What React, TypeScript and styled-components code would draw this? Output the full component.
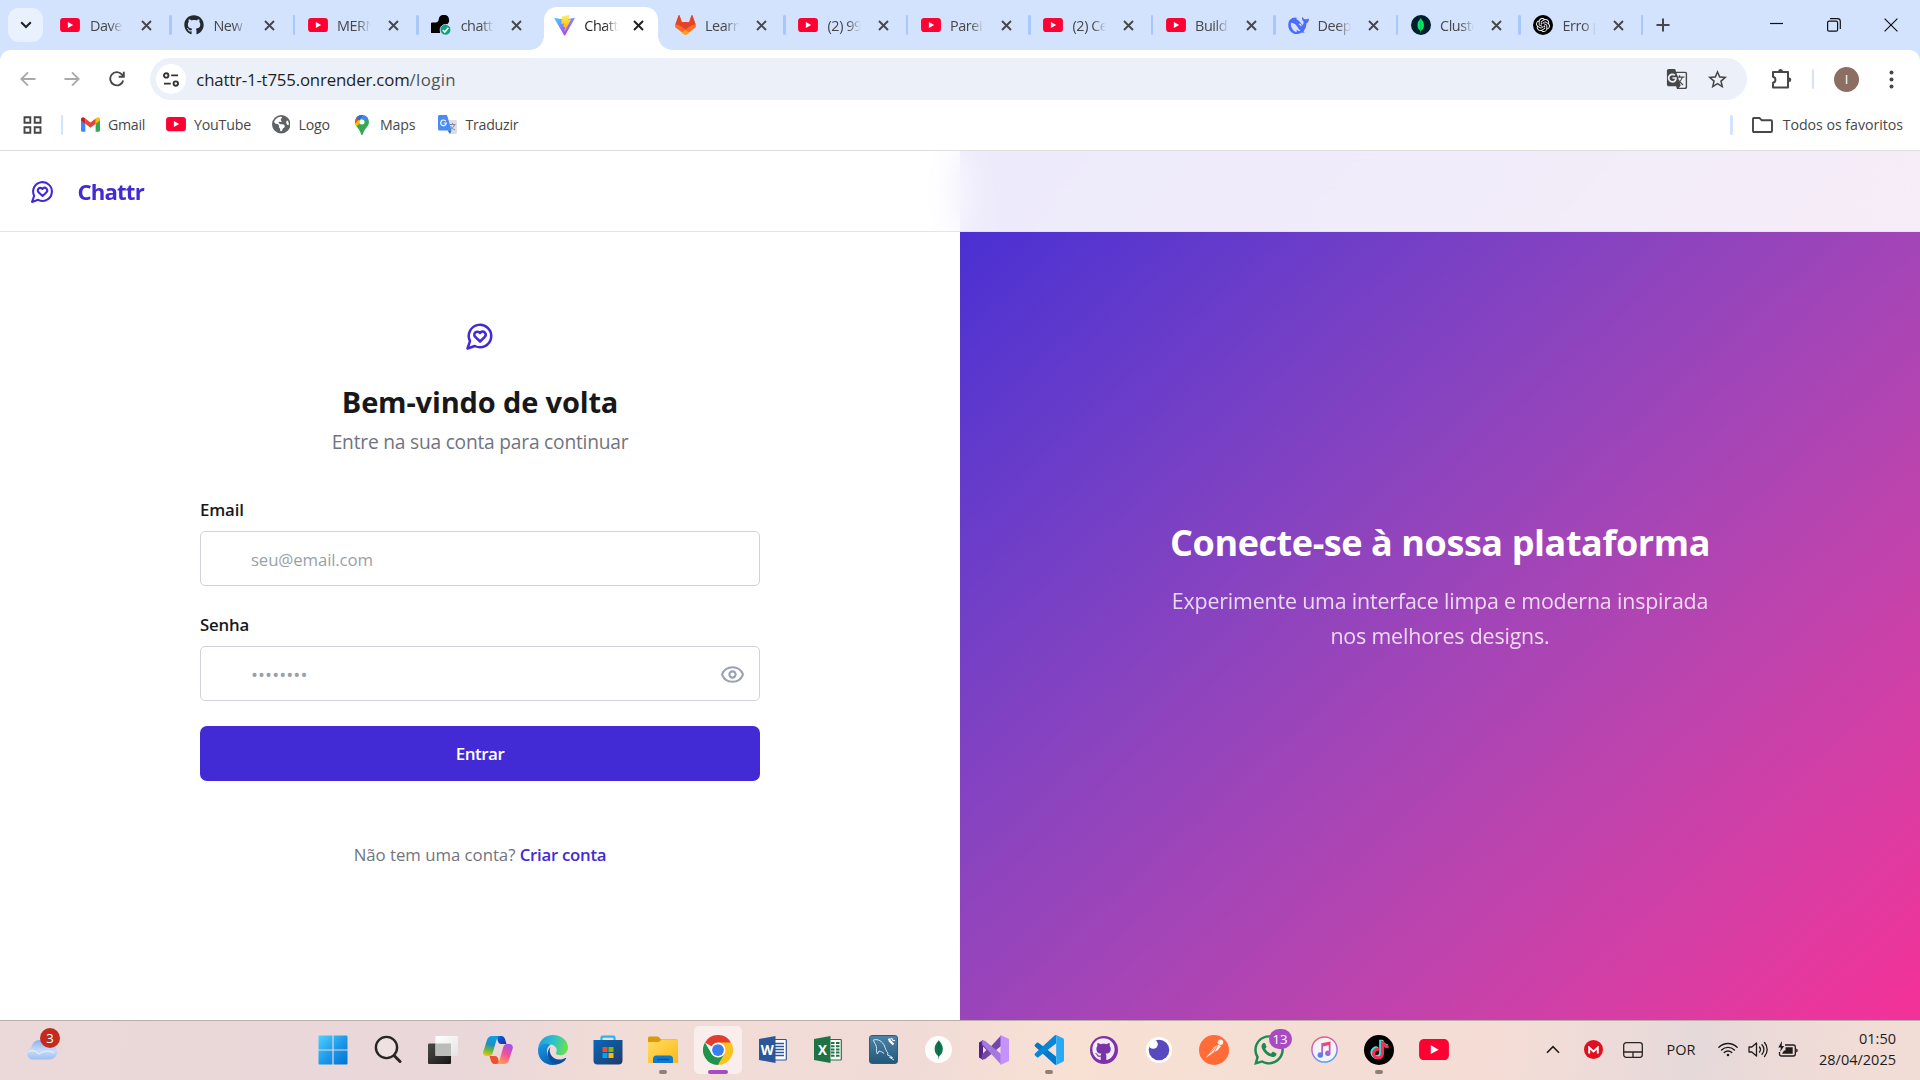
import React from 'react';
import styled, { createGlobalStyle, css } from 'styled-components';
import { FaGithub, FaTiktok, FaEarthAmericas, FaWhatsapp } from 'react-icons/fa6';
import { SiOpenai } from 'react-icons/si';
import { MdStarOutline, MdGTranslate } from 'react-icons/md';

const Global = createGlobalStyle`
  *, *::before, *::after { box-sizing: border-box; }
  html, body { margin: 0; padding: 0; overflow: hidden; }
  body { font-family: "Open Sans", "Noto Sans", sans-serif; background: #fff; color: #1a1a1e; }
  button, input { font: inherit; border: 0; background: none; padding: 0; margin: 0; color: inherit; }
  svg { display: block; flex: none; }
`;

/* ---------- layout shell ---------- */

const Screen = styled.div`
  width: 1920px;
  height: 1080px;
  display: grid;
  grid-template-rows: 50px 53px 47px 1px 869px 60px;
  overflow: hidden;
`;

/* ---------- tab strip ---------- */

const TabStrip = styled.div`
  display: flex;
  background: #d3e3fd;
  height: 50px;
`;

const TabSearch = styled.button`
  width: 35px;
  height: 34px;
  margin: 8px 4px 0 8px;
  border-radius: 11px;
  background: #eaf1fe;
  display: flex;
  align-items: center;
  justify-content: center;
`;

const Tab = styled.div<{ $width: number; $active?: boolean; $divider?: boolean }>`
  position: relative;
  flex: none;
  width: ${p => p.$width}px;
  height: 50px;
  padding-left: 13.4px;
  display: flex;
  align-items: center;
  font-size: 14.4px;
  letter-spacing: -0.45px;
  color: ${p => (p.$active ? '#1f1f1f' : '#474747')};
  ${p => p.$divider && css`
    &::after {
      content: '';
      position: absolute;
      right: -1px;
      top: 15px;
      width: 2.4px;
      height: 20px;
      border-radius: 2px;
      background: #a8c7fa;
    }
  `}
`;

const ActiveShape = styled.div`
  position: absolute;
  left: 3px;
  top: 7px;
  width: 114px;
  height: 43px;
  border-radius: 13px 13px 0 0;
  background: #fff;
  &::before, &::after {
    content: '';
    position: absolute;
    bottom: 0;
    width: 14px;
    height: 14px;
  }
  &::before { left: -14px; background: radial-gradient(circle at 0 0, transparent 13.5px, #fff 14px); }
  &::after { right: -14px; background: radial-gradient(circle at 100% 0, transparent 13.5px, #fff 14px); }
`;

const Favicon = styled.span`
  position: relative;
  width: 20px;
  height: 20px;
  display: flex;
  align-items: center;
  justify-content: center;
`;

const TabTitle = styled.span`
  position: relative;
  margin-left: 9.5px;
  width: 33.5px;
  overflow: hidden;
  white-space: nowrap;
  line-height: 24px;
  padding-top: 1px;
  mask-image: linear-gradient(to right, #000 60%, transparent);
`;

const TabClose = styled.span<{ $near?: boolean }>`
  position: relative;
  margin-left: ${p => (p.$near ? 15.5 : 17.3)}px;
`;

const NewTab = styled.button`
  width: 42px;
  display: flex;
  align-items: center;
  justify-content: center;
`;

const WindowControls = styled.div`
  margin-left: auto;
  display: flex;
  align-items: center;
  width: 172px;
  & > * { width: 57.3px; display: flex; justify-content: center; }
`;

/* ---------- toolbar ---------- */

const ToolbarBack = styled.div`background: #d3e3fd;`;

const Toolbar = styled.div`
  height: 53px;
  background: #fff;
  border-radius: 11px 11px 0 0;
  display: flex;
  align-items: center;
  padding: 5px 0 0 16.5px;
`;

const NavButton = styled.button<{ $muted?: boolean }>`
  width: 22px;
  height: 22px;
  margin-right: 22.6px;
  color: ${p => (p.$muted ? '#a9a9a9' : '#474747')};
  display: flex;
  align-items: center;
  justify-content: center;
`;

const Omnibox = styled.div`
  width: 1596.5px;
  height: 42px;
  border-radius: 21px;
  background: #ebf0f9;
  display: flex;
  align-items: center;
  padding: 0 17.5px 0 5.5px;
  color: #474747;
`;

const SiteInfo = styled.span`
  width: 30px;
  height: 30px;
  border-radius: 50%;
  background: #fff;
  display: flex;
  align-items: center;
  justify-content: center;
  margin-right: 10.5px;
`;

const Url = styled.span`
  flex: 1;
  font-size: 16.8px;
  letter-spacing: -0.17px;
  color: #1f1f1f;
  line-height: 24px;
  padding-top: 1px;
`;

const UrlPath = styled.span`color: #505358; letter-spacing: 0.4px;`;

const OmniAction = styled.span`
  width: 24px;
  margin-left: 16px;
  display: flex;
  justify-content: center;
`;

const VDivider = styled.span`
  flex: none;
  width: 2.4px;
  height: 20px;
  border-radius: 2px;
  background: #d3e3fd;
`;

const Extension = styled.span`margin: 0 19px 0 22px; color: #474747;`;

const Avatar = styled.span`
  width: 25px;
  height: 25px;
  margin: 0 30px 0 20px;
  border-radius: 50%;
  background: #8d6e63;
  color: #fff;
  font-size: 13px;
  line-height: 25px;
  text-align: center;
`;

/* ---------- bookmarks ---------- */

const Bookmarks = styled.div`
  background: #fff;
  display: flex;
  align-items: center;
  padding: 0 17px 4px 22.5px;
  font-size: 14.2px;
  letter-spacing: -0.15px;
  color: #474747;
`;

const Bookmark = styled.span<{ $left: number; $gap?: number; $w?: number; $track?: number }>`
  display: flex;
  align-items: center;
  gap: ${p => p.$gap ?? 8}px;
  margin-left: ${p => p.$left}px;
  width: ${p => (p.$w ? p.$w + 'px' : 'auto')};
  letter-spacing: ${p => p.$track ?? -0.15}px;
  white-space: nowrap;
`;

const AllBookmarks = styled.span`
  display: flex;
  align-items: center;
  gap: 10px;
  margin-left: 19px;
  letter-spacing: -0.04px;
`;

const Spacer = styled.span`flex: 1;`;
const Rule = styled.div`background: #dedede;`;

/* ---------- page ---------- */

const Page = styled.main`
  display: grid;
  grid-template: 869px / 960px 960px;
  overflow: hidden;
`;

const PageHeader = styled.header`
  grid-area: 1 / 1 / 2 / 3;
  align-self: start;
  z-index: 2;
  height: 81px;
  border-bottom: 1px solid #e5e5e8;
  background: rgba(255, 255, 255, 0.9);
  backdrop-filter: blur(19px);
  display: flex;
  align-items: center;
  gap: 23px;
  padding: 1px 0 0 29.5px;
  color: #422ad5;
`;

const BrandName = styled.span`
  font-size: 22.2px;
  font-weight: 700;
  letter-spacing: -0.85px;
  line-height: 30px;
`;

const FormPane = styled.section`
  grid-area: 1 / 1;
  background: #fff;
  display: flex;
  flex-direction: column;
  align-items: center;
  padding-top: 169.5px;
`;

const FormTitle = styled.h1`
  margin: 31.5px 0 0;
  font-size: 29px;
  font-weight: 700;
  line-height: 40px;
  letter-spacing: -0.15px;
  color: #18181b;
`;

const FormSubtitle = styled.p`
  margin: 5px 0 0;
  font-size: 19.2px;
  line-height: 30px;
  letter-spacing: -0.22px;
  color: #71747e;
`;

const Form = styled.form`
  width: 560px;
  margin-top: 40px;
  display: flex;
  flex-direction: column;
  gap: 26px;
`;

const Field = styled.label`
  display: flex;
  flex-direction: column;
  gap: 8px;
`;

const FieldLabel = styled.span`
  font-size: 16.8px;
  font-weight: 550;
  line-height: 26px;
  letter-spacing: -0.15px;
  color: #18181b;
`;

const InputBox = styled.span`
  height: 55px;
  border: 1px solid #d1d3da;
  border-radius: 5px;
  display: flex;
  align-items: center;
  padding: 1px 14px 0 50px;
  color: #99a1af;
`;

const Input = styled.input`
  flex: 1;
  outline: 0;
  font-size: 16.8px;
  letter-spacing: -0.13px;
  &::placeholder { color: #9a9fa9; opacity: 1; }
`;

const PasswordInput = styled(Input)`
  font-size: 18.5px;
  letter-spacing: 0.1px;
`;

const Submit = styled.button`
  height: 55px;
  margin-top: -1px;
  border-radius: 7px;
  background: #422ad5;
  color: #fff;
  font-size: 17px;
  font-weight: 600;
  letter-spacing: -0.5px;
`;

const SignUp = styled.p`
  margin: 61px 0 0;
  font-size: 16.8px;
  line-height: 25px;
  letter-spacing: -0.03px;
  color: #71747e;
`;

const SignUpLink = styled.a`
  color: #422ad5;
  font-weight: 600;
  letter-spacing: -0.27px;
`;

const Promo = styled.section`
  grid-area: 1 / 2;
  background: linear-gradient(to bottom right in oklab, #422ad5, #f43098);
  display: flex;
  flex-direction: column;
  align-items: center;
  justify-content: center;
  gap: 18px;
  color: #fff;
  text-align: center;
`;

const PromoTitle = styled.h2`
  margin: 0;
  padding-top: 1px;
  font-size: 36px;
  line-height: 45px;
  font-weight: 700;
  letter-spacing: -0.42px;
`;

const PromoText = styled.p`
  margin: 0;
  font-size: 21.4px;
  line-height: 35px;
  letter-spacing: -0.17px;
  opacity: 0.8;
`;

/* ---------- taskbar ---------- */

const Taskbar = styled.footer`
  border-top: 1px solid #b9aeac;
  display: flex;
  align-items: center;
  padding-bottom: 2px;
  background: linear-gradient(100deg, #ebd9d9 0%, #e9d7d9 24%, #f2dcd6 33%, #f1dbd7 48%, #f8e1d3 56%, #f4ddd4 68%, #f5ddd6 78%, #e6d9da 88%, #f2dcd6 97%, #f2dcd6 100%);
  color: #1f1b1b;
`;

const Weather = styled.div`
  position: relative;
  width: 305px;
  padding-left: 26px;
`;

const Badge = styled.span<{ $bg: string; $w: number; $x: number; $y: number }>`
  position: absolute;
  left: ${p => p.$x}px;
  top: ${p => p.$y}px;
  width: ${p => p.$w}px;
  height: 20px;
  border-radius: 10px;
  background: ${p => p.$bg};
  color: #fff;
  font-size: 13.2px;
  line-height: 20px;
  text-align: center;
`;

const AppSlot = styled.div`
  position: relative;
  width: 55.1px;
  height: 48px;
  flex: none;
  display: flex;
  align-items: center;
  justify-content: center;
`;

const AppFrame = styled.div<{ $on?: boolean }>`
  width: 48px;
  height: 48px;
  border-radius: 5px;
  display: flex;
  align-items: center;
  justify-content: center;
  ${p => p.$on && css`
    background: #f9eeec;
    box-shadow: 0 0 0 1px #ecdcda;
  `}
`;

const RunMark = styled.span<{ $on?: boolean }>`
  position: absolute;
  bottom: 0;
  left: 50%;
  transform: translateX(-50%);
  width: ${p => (p.$on ? 20 : 8)}px;
  height: 4px;
  border-radius: 2px;
  background: ${p => (p.$on ? '#a94bc0' : '#8c807d')};
`;

const Round = styled.span<{ $bg: string; $size: number; $color?: string }>`
  width: ${p => p.$size}px;
  height: ${p => p.$size}px;
  border-radius: 50%;
  background: ${p => p.$bg};
  color: ${p => p.$color ?? '#fff'};
  display: flex;
  align-items: center;
  justify-content: center;
`;

const Tray = styled.div`
  margin-left: auto;
  display: flex;
  align-items: center;
  padding-right: 24px;
  font-size: 14.5px;
`;

const TrayItem = styled.span<{ $w: number }>`
  width: ${p => p.$w}px;
  display: flex;
  justify-content: center;
`;

const Clock = styled.div`
  width: 91px;
  text-align: right;
  line-height: 20.5px;
`;

/* ---------- icons ---------- */

const YouTube = ({ w = 20 }: { w?: number }) => (
  <svg width={w} height={w * 0.71} viewBox="0 0 28 20">
    <rect width="28" height="20" rx="4.6" fill="#ff0033" />
    <path d="M11 5.800 18.400 10 11 14.200Z" fill="#fff" />
  </svg>
);

const CloseX = ({ c = '#474747' }: { c?: string }) => (
  <svg width="11" height="11" viewBox="0 0 11 11"><path d="M1 1l9 9M10 1l-9 9" stroke={c} strokeWidth="1.900" /></svg>
);

const RenderIcon = () => (
  <svg width="20" height="20" viewBox="0 0 20 20">
    <path d="M0 18V8.500q0-1 1-1H4.500Q7.500 7.200 7.700 4.500A5.200 5.200 0 1 1 14.500 10Q9 12 9 16v2Z" fill="#000" />
    <circle cx="14.500" cy="14.800" r="5.400" fill="#12a07d" stroke="#d3e3fd" strokeWidth=".8" />
    <path d="M11.800 15l2 2 3.500-4.200" fill="none" stroke="#fff" strokeWidth="1.600" />
  </svg>
);

const Vite = () => (
  <svg width="21" height="21" viewBox="0 0 32 32">
    <defs>
      <linearGradient id="va" x1="0" y1="0" x2=".6" y2="1"><stop stopColor="#41d1ff" /><stop offset="1" stopColor="#bd34fe" /></linearGradient>
      <linearGradient id="vb" x1="0" y1="0" x2="0" y2="1"><stop stopColor="#ffea83" /><stop offset=".3" stopColor="#ffdd35" /><stop offset="1" stopColor="#ffa800" /></linearGradient>
    </defs>
    <path d="M31.300 5.800 17 30.900c-.4.700-1.200.700-1.600 0L.8 5.800c-.4-.800.2-1.600 1-1.400L16 6.900l14.300-2.500c.8-.2 1.400.7 1 1.400Z" fill="url(#va)" />
    <path d="M22.800.1 12.300 2.200c-.2 0-.4.200-.4.400l-.6 10.700c0 .3.200.5.500.4l2.900-.6c.3-.1.500.2.500.5l-.9 4.200c0 .3.200.6.500.5l1.800-.5c.3-.1.600.2.500.5l-1.400 6.500c-.1.400.5.600.7.300l9.200-17.900c.2-.3-.1-.6-.4-.6l-3 .6c-.3.100-.5-.2-.4-.5l2-6.100c.1-.3-.2-.6-.5-.5Z" fill="url(#vb)" />
  </svg>
);

const GitLab = () => (
  <svg width="21" height="20" viewBox="0 0 25 24">
    <path d="M12.500 24 .8 15.300C0 14.600-.2 13 .3 11.500L4.200.6c.2-.6 1-.6 1.200 0L8 8.500h9L19.600.6c.2-.6 1-.6 1.200 0l3.900 10.900c.5 1.500.3 3.100-.5 3.800Z" fill="#fc6d26" />
    <path d="M8 8.500h9L19.600.6c.2-.6 1-.6 1.200 0l3.900 10.900C21 10.500 17 14 12.500 17.700 8 14 4 10.500.3 11.500L4.200.6c.2-.6 1-.6 1.200 0Z" fill="#e24329" />
    <path d="M7.800 21.500l4.700-3.800 4.700 3.800-4.700 2.500Z" fill="#fca326" />
  </svg>
);

const DeepSeek = () => (
  <svg width="21" height="19" viewBox="0 0 24 21">
    <path d="M23.500 2.800c-.9-.2-1.600.4-2.600.6-1.500.3-3-.4-3.700-1.900-.3-.7-1.200-.5-1.300.2-.1 1.700.6 3 1.900 4.300.2 1.300-.4 3-1 4.300C14.500 7.200 12 4.300 9.200 3 11 2.600 10.500 1.400 8.200 1.400 3.700 1.400.3 4.800.3 9.800c0 6 4.300 10.400 9.900 10.400 2.200 0 3.900-.6 5.300-1.700 1.100.4 2.700.5 3.800-.2-.7-.1-1.300-.5-1.600-1.100 2.300-2.600 3.200-5.600 3.300-9 1.900-.7 2.900-2.800 2.900-4.800 0-.4-.1-.5-.4-.6Z" fill="#4d6bfe" />
    <path d="M3.300 7.500c3.700-.3 6.300 2.700 8.200 5.700 1 1.600 1.600 2.700 2.800 3.700-1.800.2-3.500-.6-4.300-1.500-.2 1.300-.1 1.900.2 2.500C6 17.500 2.800 12.500 3.300 7.500Z" fill="#d3e3fd" />
    <path d="M12.500 9.300c.9-.7 2.600.4 2.400 2.100" stroke="#d3e3fd" strokeWidth="1.400" fill="none" />
  </svg>
);

const Leaf = ({ h, c }: { h: number; c: string }) => (
  <svg width={h * 0.5} height={h} viewBox="0 0 10 20">
    <path d="M5 0c.7 2 4.300 4.200 4.300 9.500 0 3.800-2 6.300-3.900 7.500L5.200 20h-.4L4.600 17C2.700 15.800.7 13.300.7 9.500.7 4.200 4.300 2 5 0Z" fill={c} />
    <path d="M5 2v16" stroke="#023430" strokeOpacity=".35" strokeWidth=".8" />
  </svg>
);

const ChatHeart = ({ size }: { size: number }) => (
  <svg width={size} height={size} viewBox="0 0 24 24" fill="none" stroke="#422ad5" strokeWidth="2" strokeLinecap="round" strokeLinejoin="round">
    <path d="M7.900 20A9 9 0 1 0 4 16.100L2 22Z" />
    <path d="M15.800 9.200a2.500 2.500 0 0 0-3.500 0l-.3.400-.35-.3a2.420 2.420 0 1 0-3.200 3.600l3.600 3.500 3.600-3.500c1.200-1.200 1.100-2.700.2-3.700" />
  </svg>
);

const Gmail = () => (
  <svg width="19" height="15" viewBox="0 0 24 18">
    <path d="M0 3v13.500C0 17.300.7 18 1.600 18H5.500V7.300Z" fill="#4285f4" />
    <path d="M24 3v13.500c0 .8-.7 1.500-1.600 1.500h-3.900V7.300Z" fill="#34a853" />
    <path d="M18.500 1.500V8.200L24 4V2.400c0-2-2.300-3.200-4-2Z" fill="#fbbc04" />
    <path d="M5.500 8.200V1.500L12 6.400l6.500-4.900v6.700L12 13.100Z" fill="#ea4335" />
    <path d="M0 2.400V4l5.500 4.200V1.500L4 .4C2.300-.8 0 .4 0 2.400Z" fill="#c5221f" />
  </svg>
);

const MapsPin = () => (
  <svg width="14" height="20" viewBox="0 0 14 20">
    <clipPath id="pin"><path d="M7 0a7 7 0 0 0-7 7c0 4.500 4.500 6 6 12 .3 1.300 1.700 1.300 2 0 1.500-6 6-7.500 6-12a7 7 0 0 0-7-7Z" /></clipPath>
    <g clipPath="url(#pin)">
      <rect width="14" height="20" fill="#34a853" />
      <path d="M-1 14 14 0v-1H-1Z" fill="#fbbc04" />
      <path d="M-1 9.500 8 0H-1Z" fill="#ea4335" />
      <path d="M1 3 4.500 5.500 9.500-1H2Z" fill="#1a73e8" />
      <path d="M9 0h5v3L8.500 6 6 3.500Z" fill="#4285f4" />
    </g>
    <circle cx="7" cy="7" r="2.500" fill="#fff" />
  </svg>
);

const TranslateIcon = () => (
  <svg width="19" height="19" viewBox="0 0 19 19">
    <path d="M7 5h10.500c.8 0 1.500.7 1.500 1.500v11c0 .8-.7 1.500-1.500 1.500H12Z" fill="#dcdee2" />
    <path d="M11.500 9.500h6M14.500 8.200v1.300M16.500 9.500c-.5 2.300-2 4-4 5M12.500 11c1 2 2.500 3 4.500 4" stroke="#7b8794" strokeWidth="1" fill="none" />
    <path d="M1.500 0H9l4.500 15.500H1.500A1.500 1.500 0 0 1 0 14V1.500C0 .7.700 0 1.500 0Z" fill="#4a8af4" />
    <path d="M9.500 15.500h4L12 19Z" fill="#3067d6" />
    <path d="M7.800 6.200A2.800 2.800 0 1 0 8.300 8H5.700" stroke="#fff" strokeWidth="1.200" fill="none" />
  </svg>
);

const WinLogo = () => (
  <svg width="30" height="30" viewBox="0 0 30 30">
    <defs><linearGradient id="win" x1="0" y1="0" x2="1" y2="1"><stop stopColor="#4fd2ff" /><stop offset=".5" stopColor="#1f9bea" /><stop offset="1" stopColor="#0072d0" /></linearGradient></defs>
    <path d="M1.500.5H14.400V14.400H.5V1.500q0-1 1-1ZM15.600.5h12.900q1 0 1 1V14.400H15.600ZM.5 15.600H14.400V29.500H1.500q-1 0-1-1ZM15.600 15.600H29.500v12.900q0 1-1 1H15.600Z" fill="url(#win)" />
  </svg>
);

const SearchGlyph = () => (
  <svg width="28" height="29" viewBox="0 0 28 29">
    <circle cx="12.500" cy="12.500" r="10.600" fill="#f3e6e6" fillOpacity=".6" stroke="#272624" strokeWidth="2.400" />
    <path d="M20.300 20.800 26 26.500" stroke="#272624" strokeWidth="3" strokeLinecap="round" />
  </svg>
);

const TaskView = () => (
  <svg width="30" height="28" viewBox="0 0 30 28">
    <defs>
      <linearGradient id="tv" x1="0" y1="0" x2="1" y2="1"><stop stopColor="#4a4a48" /><stop offset="1" stopColor="#171716" /></linearGradient>
      <linearGradient id="tw" x1="0" y1="0" x2="1" y2="1"><stop stopColor="#fff" /><stop offset="1" stopColor="#e4e4e4" /></linearGradient>
    </defs>
    <rect x="0" y="7.500" width="23" height="20.500" rx="1" fill="url(#tv)" />
    <rect x="7.500" y="0" width="22.500" height="20" rx="1" fill="url(#tw)" />
    <rect x="7.500" y="7.500" width="15.500" height="12.500" fill="#bcbcba" />
  </svg>
);

const Copilot = () => (
  <svg width="30" height="28" viewBox="0 0 30 28">
    <defs>
      <linearGradient id="ca" x1=".4" y1="0" x2=".2" y2="1"><stop stopColor="#0a9fe8" /><stop offset=".4" stopColor="#1f8fc0" /><stop offset=".7" stopColor="#6cb83e" /><stop offset="1" stopColor="#f4c60a" /></linearGradient>
      <linearGradient id="cb" x1=".8" y1="0" x2=".3" y2="1"><stop stopColor="#a44df0" /><stop offset=".5" stopColor="#f0539a" /><stop offset="1" stopColor="#ffa04a" /></linearGradient>
      <linearGradient id="cc" x1="0" y1="0" x2="1" y2="1"><stop stopColor="#1160d8" /><stop offset="1" stopColor="#1b2fa8" /></linearGradient>
    </defs>
    <path d="M14 0h4.500c2 0 3 1.500 3.500 3l1.500 5H18c-2 0-3-2-3.500-4Z" fill="url(#cc)" />
    <path d="M16 28h-4.500C9.500 28 8.500 26.500 8 25l-1.500-5H12c2 0 3 2 3.500 4Z" fill="#ee5130" />
    <path d="M9 0h8c-2 0-3 2-3.500 4L9.700 17c-.6 2-2 3-3.700 3H3.500C1 20-.3 18 .3 15.500L4 4c.9-2.600 2.600-4 5-4Z" fill="url(#ca)" />
    <path d="M21 28h-8c2 0 3-2 3.500-4l3.800-13c.6-2 2-3 3.700-3h2.500c2.500 0 3.800 2 3.200 4.500L26 24c-.9 2.600-2.600 4-5 4Z" fill="url(#cb)" />
  </svg>
);

const Edge = () => (
  <svg width="30" height="30" viewBox="0 0 30 30">
    <defs>
      <linearGradient id="ea" x1="0" y1=".3" x2="1" y2=".5"><stop stopColor="#1e9de0" /><stop offset=".5" stopColor="#2cc3c9" /><stop offset="1" stopColor="#6be04c" /></linearGradient>
      <linearGradient id="eb" x1="0" y1="0" x2=".4" y2="1"><stop stopColor="#1b9be3" /><stop offset="1" stopColor="#0a63b8" /></linearGradient>
    </defs>
    <path d="M.2 13C1.200 5.200 7.300 0 15 0c8.500 0 15 5.600 15 12.500 0 4.500-3.300 7.800-7.600 7.800-3.500 0-5-1.300-4.300-2.500 2-3.500-.6-7.800-5.600-8.300C7 9 2.300 10.500.2 13Z" fill="url(#ea)" />
    <path d="M.2 13C2.400 9.200 8 7.600 12.700 9.800c-3 1.200-4.200 4.700-3.500 8.500C10 23 13 27.500 18.800 29.500 9 32-1.500 25 .2 13Z" fill="url(#eb)" />
    <path d="M12.500 12c-2.500 4.800 1 12.500 9 12.500 2.700 0 4.200-.6 6-1.500.6-.3.900.3.600.8-2 3.200-5.300 5.200-9.300 5.700C10 28.500 7 17 12.500 12Z" fill="#0d4f9e" />
  </svg>
);

const Store = () => (
  <svg width="30" height="30" viewBox="0 0 30 30">
    <defs><linearGradient id="st" x1="0" y1="0" x2="1" y2="1"><stop stopColor="#0669bd" /><stop offset="1" stopColor="#243a66" /></linearGradient></defs>
    <path d="M8.500 7V3q0-1.300 1.300-1.300h10.400Q21.500 1.700 21.500 3v4" fill="none" stroke="#23b6f2" strokeWidth="2.200" />
    <path d="M.5 5h29v20.500q0 4-4 4h-21q-4 0-4-4Z" fill="url(#st)" />
    <path d="M9.500 12h5v5h-5Z" fill="#f25022" /><path d="M15.500 12h5v5h-5Z" fill="#7fba00" />
    <path d="M9.500 18h5v5h-5Z" fill="#00a4ef" /><path d="M15.500 18h5v5h-5Z" fill="#ffb900" />
  </svg>
);

const Explorer = () => (
  <svg width="30" height="28" viewBox="0 0 30 28">
    <defs><linearGradient id="ex" x1="0" y1="0" x2="1" y2="1"><stop stopColor="#ffdc60" /><stop offset="1" stopColor="#fbb917" /></linearGradient></defs>
    <path d="M0 2Q0 .5 1.500.5H9q1.500 0 2.300 1L13 3.500H28.500q1.500 0 1.500 1.500V9H0Z" fill="#dc9a08" />
    <path d="M0 6h10.500l3-2H30v23H0Z" fill="url(#ex)" />
    <path d="M5 27v-4q0-3.500 3.500-3.500h13q3.500 0 3.500 3.500v4Z" fill="#0f79d0" />
    <path d="M9 23.500h12" stroke="#0a4f94" strokeWidth="1.300" />
  </svg>
);

const Chrome = () => (
  <svg width="30" height="30" viewBox="0 0 48 48">
    <path d="M24 24 3.200 12A24 24 0 0 1 44.800 12Z" fill="#e33b2e" />
    <path d="M24 12h20.800A24 24 0 0 1 24 48L34.400 30Z" fill="#fcc31e" />
    <path d="M3.200 12 13.600 30 34.400 30 24 48A24 24 0 0 1 3.200 12Z" fill="#21944b" />
    <circle cx="24" cy="24" r="12" fill="#fff" />
    <circle cx="24" cy="24" r="9.400" fill="#3a7df0" />
  </svg>
);

const OfficeBox = styled.span`position: relative; width: 28px; height: 27px;`;

const Letter = styled.span`
  position: absolute;
  left: 0.5px;
  top: 5.5px;
  width: 15px;
  display: flex;
  justify-content: center;
  font-size: 13.5px;
  line-height: 16px;
  font-weight: 700;
  color: #fff;
`;

const Office = ({ c, letter, sheet }: { c: string; letter: string; sheet?: boolean }) => (
  <OfficeBox>
    <svg width="28" height="27" viewBox="0 0 28 27">
      <rect x="13" y="3.500" width="14.300" height="20.500" rx=".8" fill="#fff" stroke={c} strokeWidth="1.200" />
      {sheet
        ? <path d="M17 7h3.500M22 7h3.500M17 10.200h3.500M22 10.200h3.500M17 13.400h3.500M22 13.400h3.500M17 16.600h3.500M22 16.600h3.500M17 19.800h3.500M22 19.800h3.500" stroke={c} strokeWidth="2" />
        : <path d="M16 7.500h9M16 10.500h9M16 13.500h9M16 16.500h9M16 19.500h9" stroke={c} strokeWidth="1.500" />}
      <path d="M0 3 16.500 0v27L0 24Z" fill={c} />
    </svg>
    <Letter>{letter}</Letter>
  </OfficeBox>
);

const WorkbenchBox = styled.span`
  width: 29px;
  height: 29px;
  border-radius: 3px;
  border: 1px solid #2c5d7e;
  background: linear-gradient(#4b83a8, #23597a);
  display: flex;
  align-items: center;
  justify-content: center;
`;

const Dolphin = () => (
  <svg width="27" height="27" viewBox="0 0 27 27" fill="none" stroke="#dbe8ef" strokeWidth="1">
    <path d="M3.500 4c4.500-1.500 9 1.500 11 6 1 2.500 1.500 5 3.500 7l-.5 2c2 .5 3.500 1.500 5 2.500l-3-.2 4.500 2.700M3.500 4c.3 2.500 2.300 4 2.800 6.500.5 2.500-.3 5.500 1 7.500L9 15c2 .5 3.500 1 5 2.500" />
    <path d="M19 2.500l1 2.500 3.500 3.500" stroke="#fff" strokeWidth="2.400" /><path d="M21.500 2l1.500 2.500h2M19 5.500h3" stroke="#fff" strokeWidth="1.200" />
  </svg>
);

const VisualStudio = () => (
  <svg width="30" height="30" viewBox="0 0 30 30">
    <path d="M0 7.500 4 5.300v19.400L0 22.500Z" fill="#52218a" />
    <path d="M4 5.300 15 15 4 24.700l-1.500-.7V20L7.500 15 2.500 10V6Z" fill="#6b3fa5" />
    <path d="M3 24l3 .3L22 11V.5L3.500 20.500Z" fill="#7446a8" />
    <path d="M3 6 6 5.700 22 19v10.500L3.500 9.500Z" fill="#a478dc" />
    <path d="M21.500 0 30 4v22l-8.500 4Z" fill="#c592fb" />
  </svg>
);

const VSCode = () => (
  <svg width="30" height="30" viewBox="0 0 30 30">
    <path d="M1 9.500 3 7.800q.7-.5 1.400 0L22 21.500V30q-1 0-1.700-.7L1 11.600Q0 10.500 1 9.500Z" fill="#0179cb" />
    <path d="M1 20.500 3 22.200q.7.500 1.400 0L22 8.500V0q-1 0-1.700.7L1 18.400Q0 19.500 1 20.500Z" fill="#0a86d9" />
    <path d="M21 .5q1-.6 1.800-.2L29 3.300q1 .5 1 1.500v20.400q0 1-1 1.500l-6.200 3q-.8.400-1.800-.2 1.200.2 1.200-1.300V1.800Q22.200.3 21 .5Z" fill="#27a9f3" />
  </svg>
);

const Insomnia = () => (
  <svg width="26" height="26" viewBox="0 0 26 26">
    <circle cx="13" cy="13" r="13" fill="#fff" />
    <circle cx="13" cy="13" r="10.300" fill="#5849be" />
    <circle cx="7.200" cy="7.200" r="4.600" fill="#fff" />
  </svg>
);

const Postman = () => (
  <svg width="30" height="30" viewBox="0 0 30 30">
    <circle cx="15" cy="15" r="15" fill="#ff6c37" />
    <circle cx="21.500" cy="7.300" r="2.700" fill="#fff1ea" />
    <path d="M19.500 9.800 15 12l-2.500 3.500L10 19l-3.500 4 5-3.300L15 17l3.500-1.500L22 11Z" fill="#fff1ea" />
    <path d="M11 18.500l5-6M18.500 10.500 15 17" stroke="#ff6c37" strokeWidth=".8" />
  </svg>
);

const MusicIcon = () => (
  <svg width="27" height="27" viewBox="0 0 27 27">
    <defs>
      <linearGradient id="mr" x1=".3" y1="0" x2=".6" y2="1"><stop stopColor="#f4556b" /><stop offset=".5" stopColor="#b070e0" /><stop offset="1" stopColor="#4aa8f5" /></linearGradient>
      <linearGradient id="mn" x1=".6" y1="0" x2=".3" y2="1"><stop stopColor="#f4465e" /><stop offset=".5" stopColor="#b25fe0" /><stop offset="1" stopColor="#3f86f0" /></linearGradient>
    </defs>
    <circle cx="13.500" cy="13.500" r="12.600" fill="#f4f3f8" stroke="url(#mr)" strokeWidth="1.500" />
    <path d="M10.300 7.200 19.500 5.500v11.700a2.700 2.700 0 1 1-1.700-2.500V9.300l-5.800 1.100v8.600a2.700 2.700 0 1 1-1.700-2.500Z" fill="url(#mn)" />
  </svg>
);

const TikBox = styled.span`
  display: grid;
  place-items: center;
  & > svg { grid-area: 1 / 1; }
  & > svg:nth-child(1) { color: #25f4ee; transform: translate(-0.8px, -0.6px); }
  & > svg:nth-child(2) { color: #fe2c55; transform: translate(0.8px, 0.6px); }
`;

const CloudIcon = () => (
  <svg width="31" height="21" viewBox="0 0 31 21">
    <defs><linearGradient id="cl" x1="0" y1="0" x2="0" y2="1"><stop stopColor="#8fb0ea" /><stop offset=".55" stopColor="#c8dcfa" /><stop offset="1" stopColor="#9dbdf0" /></linearGradient></defs>
    <path d="M6 20.500a6 6 0 0 1-.8-11.500A9 9 0 0 1 22 5.500 7.500 7.500 0 0 1 25 20.500Z" fill="url(#cl)" />
    <path d="M2 13c4-3 8-1 11 2 4-3 10-4 15-1" stroke="#e6f0ff" strokeWidth="1.300" fill="none" opacity=".8" />
  </svg>
);

/* ---------- data ---------- */

const tabs: { title: string; icon: React.ReactNode; w: number; active?: boolean; divider?: boolean }[] = [
  { title: 'Dave', icon: <YouTube />, w: 123.6, divider: true },
  { title: 'New r', icon: <FaGithub size={20} color="#24292f" />, w: 123.6, divider: true },
  { title: 'MERN', icon: <YouTube />, w: 123.6, divider: true },
  { title: 'chattr', icon: <RenderIcon />, w: 123.6 },
  { title: 'Chattr', icon: <Vite />, w: 120.8, active: true },
  { title: 'Learn', icon: <GitLab />, w: 122.5, divider: true },
  { title: '(2) 99', icon: <YouTube />, w: 122.5, divider: true },
  { title: 'Parei', icon: <YouTube />, w: 122.5, divider: true },
  { title: '(2) Ce', icon: <YouTube />, w: 122.5, divider: true },
  { title: 'Build', icon: <YouTube />, w: 122.5, divider: true },
  { title: 'Deep', icon: <DeepSeek />, w: 122.5, divider: true },
  { title: 'Cluste', icon: <Round $bg="#001e2b" $size={20}><Leaf h={15} c="#00ed64" /></Round>, w: 122.5, divider: true },
  { title: 'Erro p', icon: <Round $bg="#000" $size={20}><SiOpenai size={14} /></Round>, w: 122.5, divider: true },
];

const apps: { icon: React.ReactNode; run?: boolean; on?: boolean; badge?: string }[] = [
  { icon: <WinLogo /> },
  { icon: <SearchGlyph /> },
  { icon: <TaskView /> },
  { icon: <Copilot /> },
  { icon: <Edge /> },
  { icon: <Store /> },
  { icon: <Explorer />, run: true },
  { icon: <Chrome />, run: true, on: true },
  { icon: <Office c="#2b579a" letter="W" /> },
  { icon: <Office c="#1f7244" letter="X" sheet /> },
  { icon: <WorkbenchBox><Dolphin /></WorkbenchBox> },
  { icon: <Round $bg="#fcfcfb" $size={27}><Leaf h={19} c="#10744f" /></Round> },
  { icon: <VisualStudio /> },
  { icon: <VSCode />, run: true },
  { icon: <Round $bg="#7a33a6" $size={28}><FaGithub size={23} color="#f3ecf8" /></Round> },
  { icon: <Insomnia /> },
  { icon: <Postman /> },
  { icon: <FaWhatsapp size={34} color="#1d8a52" />, badge: '13' },
  { icon: <MusicIcon /> },
  { icon: <Round $bg="#000" $size={30}><TikBox><FaTiktok size={19} /><FaTiktok size={19} /><FaTiktok size={19} /></TikBox></Round>, run: true },
  { icon: <YouTube w={30} /> },
];

export default function App() {
  return (
    <>
      <Global />
      <Screen>
        <TabStrip>
          <TabSearch>
            <svg width="12" height="8" viewBox="0 0 12 8"><path d="M1.200 1.300 6 6l4.800-4.700" stroke="#1f1f1f" strokeWidth="2" fill="none" /></svg>
          </TabSearch>
          {tabs.map((t, i) => (
            <Tab key={i} $width={t.w} $active={t.active} $divider={t.divider}>
              {t.active && <ActiveShape />}
              <Favicon>{t.icon}</Favicon>
              <TabTitle>{t.title}</TabTitle>
              <TabClose $near={t.active}><CloseX c={t.active ? '#1f1f1f' : '#474747'} /></TabClose>
            </Tab>
          ))}
          <NewTab>
            <svg width="14" height="14" viewBox="0 0 14 14"><path d="M7 .5v13M.5 7h13" stroke="#474747" strokeWidth="2" /></svg>
          </NewTab>
          <WindowControls>
            <span><svg width="13" height="14" viewBox="0 0 13 14"><path d="M0 5.500h13" stroke="#111" strokeWidth="1.200" /></svg></span>
            <span>
              <svg width="14" height="14" viewBox="0 0 14 14" fill="none" stroke="#111" strokeWidth="1.200">
                <rect x=".6" y="3.200" width="10" height="10" rx="1.500" /><path d="M3 .7h7.500Q13.300.7 13.300 3.500V11" />
              </svg>
            </span>
            <span><svg width="14" height="14" viewBox="0 0 14 14"><path d="M.6.6l12.800 12.800M13.400.6.6 13.400" stroke="#111" strokeWidth="1.200" /></svg></span>
          </WindowControls>
        </TabStrip>

        <ToolbarBack>
          <Toolbar>
            <NavButton $muted><svg width="16" height="16" viewBox="0 0 16 16"><path d="M15.500 8H1.500M8 1.300 1.300 8 8 14.700" stroke="currentColor" strokeWidth="1.800" fill="none" /></svg></NavButton>
            <NavButton $muted><svg width="16" height="16" viewBox="0 0 16 16"><path d="M.5 8h14M8 1.300 14.700 8 8 14.700" stroke="currentColor" strokeWidth="1.800" fill="none" /></svg></NavButton>
            <NavButton><svg width="16" height="16" viewBox="0 0 16 16"><path d="M14.200 9.500A6.600 6.600 0 1 1 12.800 3.400L14.600 5.300M14.800.8v5H9.700" stroke="currentColor" strokeWidth="1.900" fill="none" /></svg></NavButton>
            <Omnibox>
              <SiteInfo>
                <svg width="16" height="15" viewBox="0 0 16 15" fill="none" stroke="#333" strokeWidth="1.900"><circle cx="3.200" cy="3.400" r="2.200" /><path d="M8.200 3.400H15M1 11.600h6.800" /><circle cx="12.800" cy="11.600" r="2.200" /></svg>
              </SiteInfo>
              <Url>chattr-1-t755.onrender.com<UrlPath>/login</UrlPath></Url>
              <OmniAction><MdGTranslate size={22} /></OmniAction>
              <OmniAction><MdStarOutline size={23} /></OmniAction>
            </Omnibox>
            <Extension>
              <svg width="24" height="24" viewBox="0 0 24 24" fill="none" stroke="#474747" strokeWidth="2">
                <path d="M4 5h15v15.500H4v-4.800c3.200-.6 3.200-5.300 0-5.900Z" strokeLinejoin="round" /><path d="M9.200 4.200a2.300 2.300 0 0 1 4.600 0ZM20 10.500a2.300 2.300 0 0 1 0 4.600Z" fill="#474747" stroke="none" />
              </svg>
            </Extension>
            <VDivider />
            <Avatar>I</Avatar>
            <svg width="5" height="19" viewBox="0 0 5 19" fill="#474747"><circle cx="2.500" cy="2.500" r="2" /><circle cx="2.500" cy="9.500" r="2" /><circle cx="2.500" cy="16.500" r="2" /></svg>
          </Toolbar>
        </ToolbarBack>

        <Bookmarks>
          <svg width="19" height="18" viewBox="0 0 19 18" fill="none" stroke="#474747" strokeWidth="1.900"><path d="M1.500 1.200h5.800v5.500H1.500ZM11.700 1.200h5.800v5.500h-5.800ZM1.500 11.200h5.800v5.500H1.500ZM11.700 11.200h5.800v5.500h-5.800Z" /></svg>
          <Bookmark $left={19}><VDivider /></Bookmark>
          <Bookmark $left={18} $w={85.500} $track={-0.25}><Gmail />Gmail</Bookmark>
          <Bookmark $left={0} $w={105.500} $gap={7.500} $track={-0.18}><YouTube />YouTube</Bookmark>
          <Bookmark $left={0} $w={83.500}><FaEarthAmericas size={18.500} color="#5f6368" />Logo</Bookmark>
          <Bookmark $left={0} $w={82.500} $gap={10.500}><MapsPin />Maps</Bookmark>
          <Bookmark $left={0} $gap={8.500} $track={-0.25}><TranslateIcon />Traduzir</Bookmark>
          <Spacer />
          <VDivider />
          <AllBookmarks>
            <svg width="21" height="16" viewBox="0 0 21 16" fill="none" stroke="#474747" strokeWidth="1.900"><path d="M1 14V2q0-1 1-1h5.500l2.300 2.300H19q1 0 1 1V14q0 1-1 1H2q-1 0-1-1Z" /></svg>
            Todos os favoritos
          </AllBookmarks>
        </Bookmarks>
        <Rule />

        <Page>
          <PageHeader>
            <ChatHeart size={25} />
            <BrandName>Chattr</BrandName>
          </PageHeader>
          <FormPane>
            <ChatHeart size={30} />
            <FormTitle>Bem-vindo de volta</FormTitle>
            <FormSubtitle>Entre na sua conta para continuar</FormSubtitle>
            <Form>
              <Field>
                <FieldLabel>Email</FieldLabel>
                <InputBox><Input placeholder="seu@email.com" /></InputBox>
              </Field>
              <Field>
                <FieldLabel>Senha</FieldLabel>
                <InputBox>
                  <PasswordInput type="password" placeholder="••••••••" />
                  <svg width="25" height="25" viewBox="0 0 24 24" fill="none" stroke="#99a1af" strokeWidth="2" strokeLinecap="round" strokeLinejoin="round">
                    <path d="M2.062 12.348a1 1 0 0 1 0-.696 10.750 10.750 0 0 1 19.876 0 1 1 0 0 1 0 .696 10.750 10.750 0 0 1-19.876 0" /><circle cx="12" cy="12" r="3" />
                  </svg>
                </InputBox>
              </Field>
              <Submit type="button">Entrar</Submit>
            </Form>
            <SignUp>Não tem uma conta? <SignUpLink>Criar conta</SignUpLink></SignUp>
          </FormPane>
          <Promo>
            <PromoTitle>Conecte-se à nossa plataforma</PromoTitle>
            <PromoText>Experimente uma interface limpa e moderna inspirada<br />nos melhores designs.</PromoText>
          </Promo>
        </Page>

        <Taskbar>
          <Weather>
            <CloudIcon />
            <Badge $bg="#c42b1c" $w={20} $x={40} $y={-11}>3</Badge>
          </Weather>
          {apps.map((a, i) => (
            <AppSlot key={i}>
              <AppFrame $on={a.on}>{a.icon}</AppFrame>
              {a.run && <RunMark $on={a.on} />}
              {a.badge && <Badge $bg="#a94bc0" $w={23} $x={27} $y={3}>{a.badge}</Badge>}
            </AppSlot>
          ))}
          <Tray>
            <TrayItem $w={40}><svg width="14" height="9" viewBox="0 0 14 9"><path d="M1 7.800 7 1.600l6 6.200" stroke="#1f1b1b" strokeWidth="1.600" fill="none" /></svg></TrayItem>
            <TrayItem $w={40}>
              <Round $bg="#e01020" $size={19}>
                <svg width="11" height="8" viewBox="0 0 11 8"><path d="M1.200 7.500V1.500L5.500 5.500 9.800 1.500v6" stroke="#fff" strokeWidth="1.900" fill="none" /></svg>
              </Round>
            </TrayItem>
            <TrayItem $w={39}><svg width="20" height="16" viewBox="0 0 20 16" fill="none" stroke="#2a2525" strokeWidth="1.300"><rect x=".7" y=".7" width="18.600" height="14.600" rx="2.500" /><path d="M.7 10h18.600M10 10v5.300" /></svg></TrayItem>
            <TrayItem $w={58}>POR</TrayItem>
            <TrayItem $w={35}>
              <svg width="20" height="15" viewBox="0 0 20 15" fill="none" stroke="#1f1b1b" strokeWidth="1.400" strokeLinecap="round"><path d="M.9 5.300a12.800 12.800 0 0 1 18.200 0M3.600 8a9 9 0 0 1 12.800 0M6.300 10.600a5.200 5.200 0 0 1 7.400 0" /><circle cx="10" cy="13" r="1.300" fill="#1f1b1b" stroke="none" /></svg>
            </TrayItem>
            <TrayItem $w={26}>
              <svg width="20" height="17" viewBox="0 0 20 17" fill="none" stroke="#1f1b1b" strokeWidth="1.300" strokeLinecap="round" strokeLinejoin="round"><path d="M1 6v5h2.800L8.500 15V2L3.800 6ZM11.500 6a4 4 0 0 1 0 5M14 3.700a7 7 0 0 1 0 9.600M16.500 1.500a10.500 10.500 0 0 1 0 14" /></svg>
            </TrayItem>
            <TrayItem $w={34}>
              <svg width="20" height="17" viewBox="0 0 20 17"><path d="M7 4h8.300Q17.300 4 17.300 6v7q0 2-2 2H3.500q-2 0-2-2v-2" fill="none" stroke="#1f1b1b" strokeWidth="1.300" /><path d="M7.500 6.200h7.200v6.600H4L6 9.500h1.500ZM18.200 7.500q1.600.4 1.600 2t-1.600 2ZM4 0 .3 6.500H3L2 11l4.200-6H3.700Z" fill="#1f1b1b" /></svg>
            </TrayItem>
            <Clock>01:50<br />28/04/2025</Clock>
          </Tray>
        </Taskbar>
      </Screen>
    </>
  );
}
